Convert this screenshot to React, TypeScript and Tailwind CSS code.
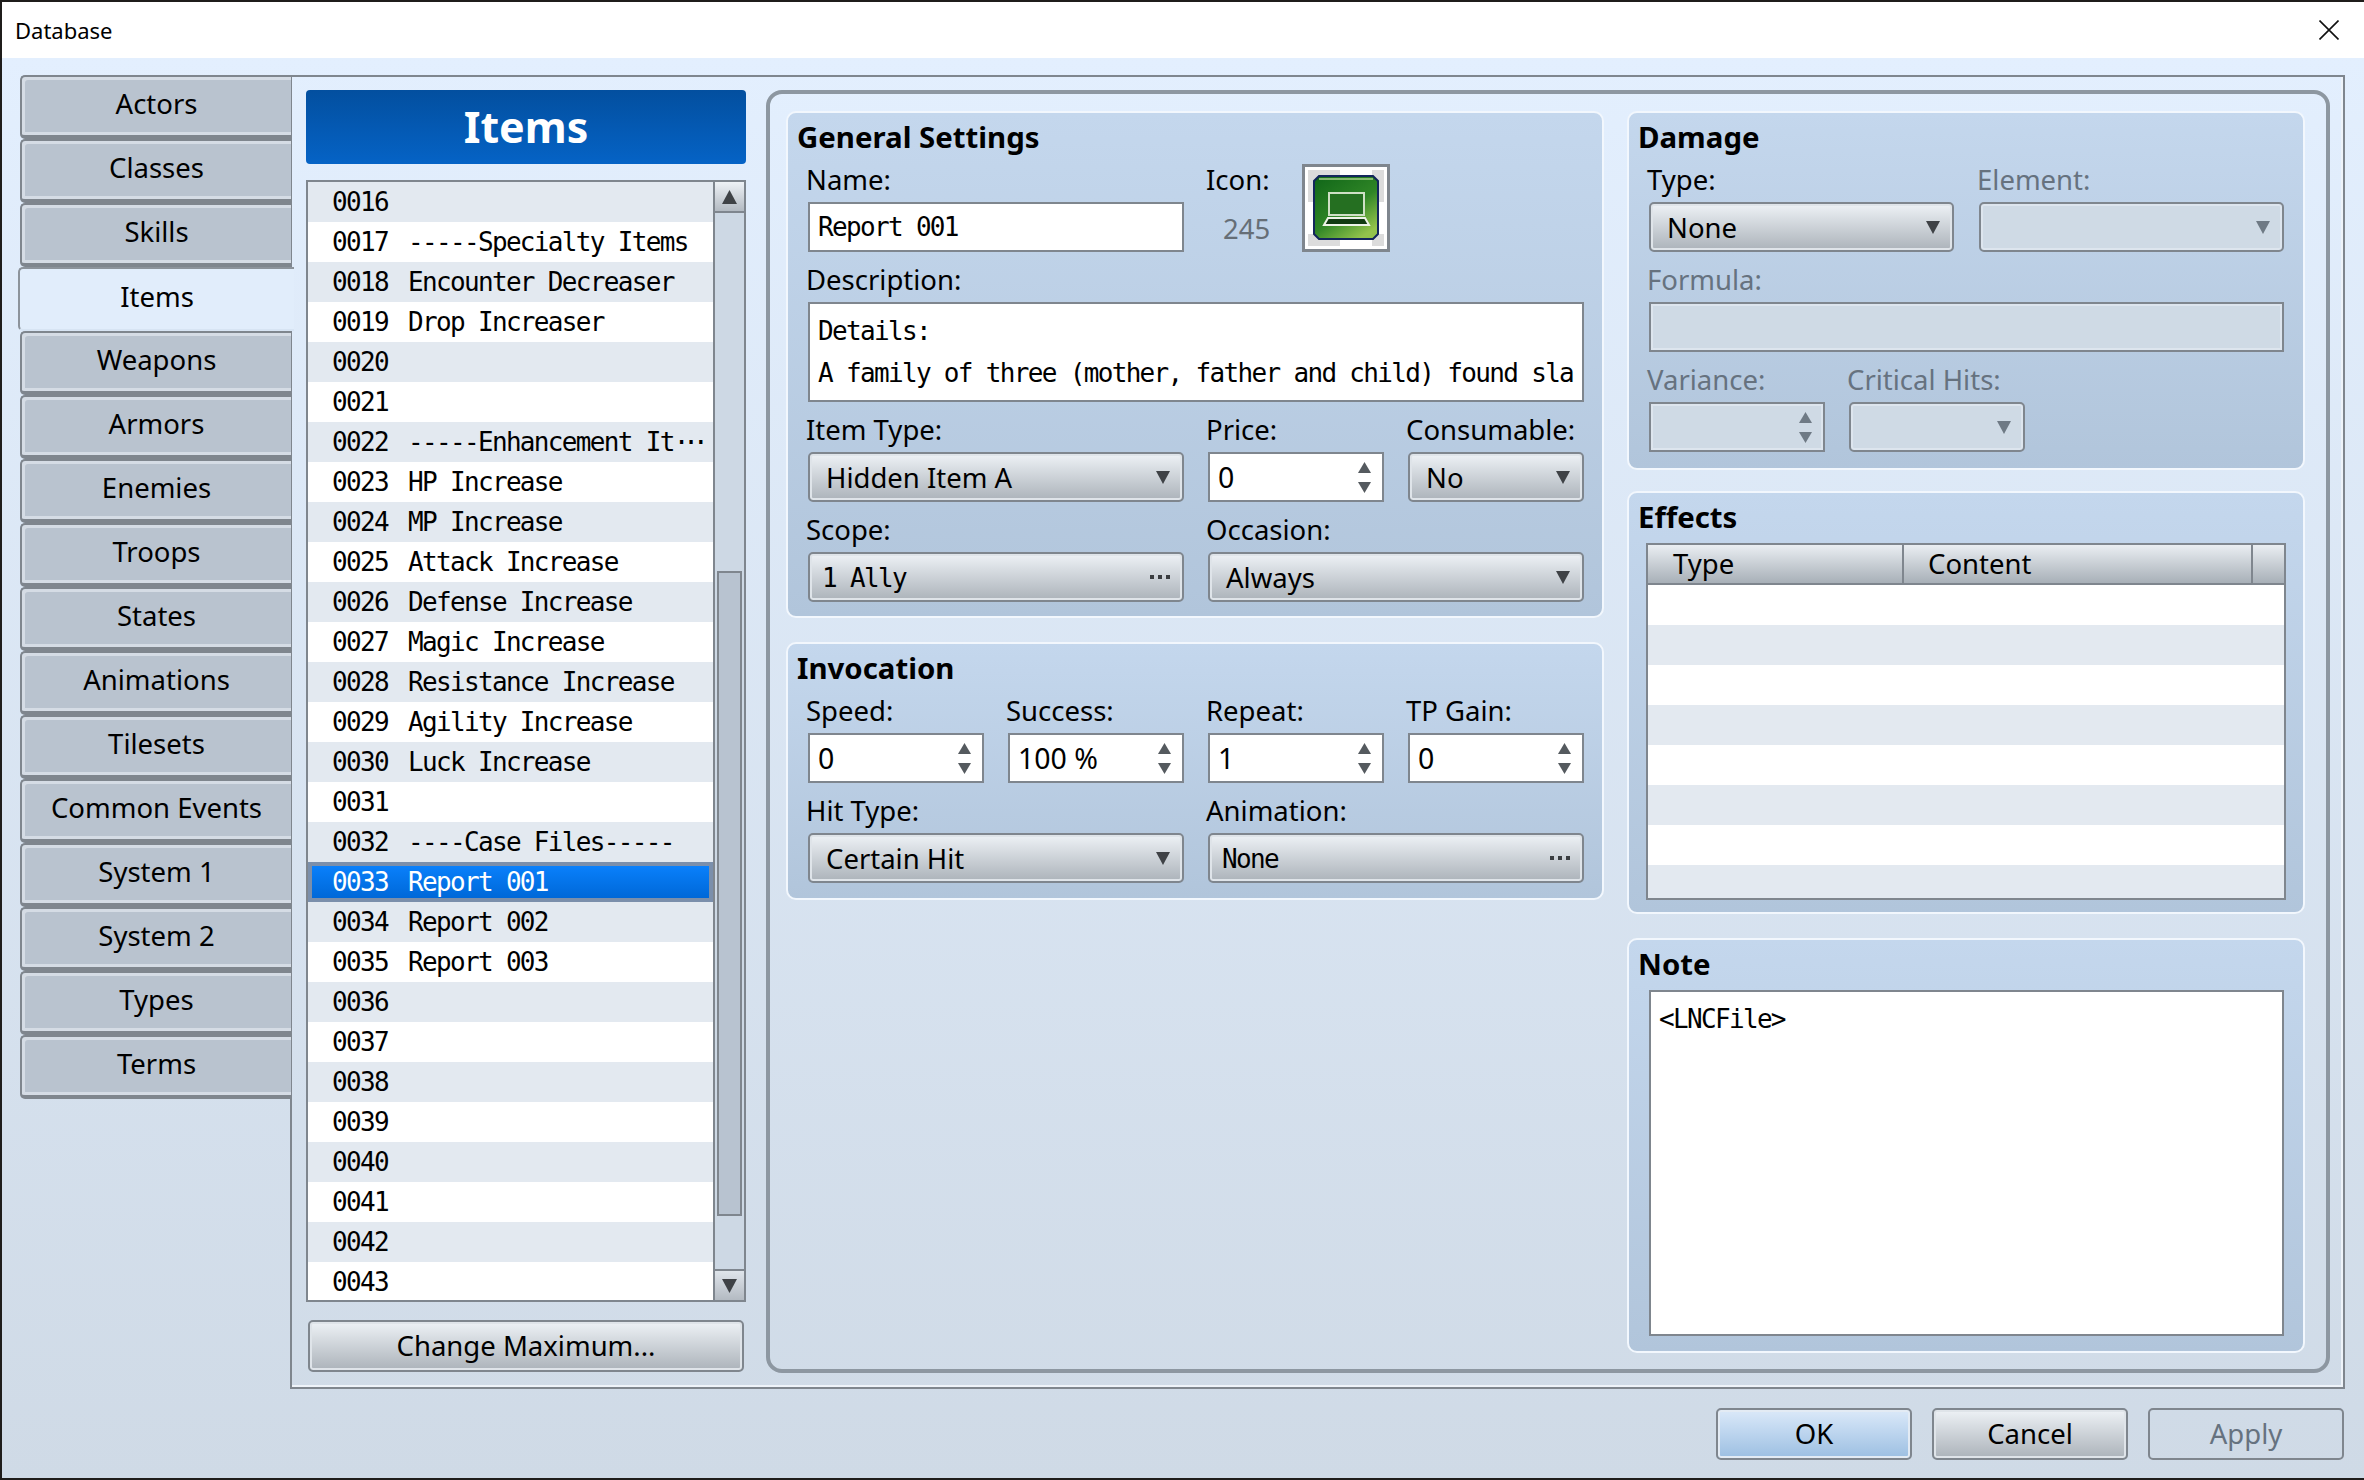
import React from 'react';

const SANS = "font-['Noto_Sans',sans-serif]";
const MONO = "font-['DejaVu_Sans_Mono',monospace] text-[26px] tracking-[-1.67px]";

const TABS = [
  'Actors', 'Classes', 'Skills', 'Items', 'Weapons', 'Armors', 'Enemies', 'Troops',
  'States', 'Animations', 'Tilesets', 'Common Events', 'System 1', 'System 2', 'Types', 'Terms',
];

const ITEMS: [string, string][] = [
  ['0016', ''], ['0017', '-----Specialty Items'], ['0018', 'Encounter Decreaser'], ['0019', 'Drop Increaser'],
  ['0020', ''], ['0021', ''], ['0022', '-----Enhancement It'], ['0023', 'HP Increase'], ['0024', 'MP Increase'],
  ['0025', 'Attack Increase'], ['0026', 'Defense Increase'], ['0027', 'Magic Increase'], ['0028', 'Resistance Increase'],
  ['0029', 'Agility Increase'], ['0030', 'Luck Increase'], ['0031', ''], ['0032', '----Case Files-----'],
  ['0033', 'Report 001'], ['0034', 'Report 002'], ['0035', 'Report 003'], ['0036', ''], ['0037', ''], ['0038', ''],
  ['0039', ''], ['0040', ''], ['0041', ''], ['0042', ''], ['0043', ''],
];

const Arrow = ({ down, color = '#3f4246', w = 14, h = 13 }: { down?: boolean; color?: string; w?: number; h?: number }) => (
  <svg width={w} height={h} viewBox="0 0 12 12" preserveAspectRatio="none" className="shrink-0">
    <path d={down ? 'M0 0H12L6 12Z' : 'M0 12H12L6 0Z'} fill={color} />
  </svg>
);

const Label = ({ children, off }: { children: React.ReactNode; off?: boolean }) => (
  <div className={`-ml-[2px] h-[42px] leading-[40px] whitespace-nowrap ${off ? 'text-[#66727f]' : 'text-black'}`}>{children}</div>
);

const Select = ({ value, mono, dots, off }: { value?: string; mono?: boolean; dots?: boolean; off?: boolean }) => (
  <div
    className={`flex h-[50px] items-center justify-between rounded-[5px] border-2 border-[#7f868e] pr-[12px] ${mono ? 'pl-[12px]' : 'pl-[16px]'} ${
      off
        ? 'bg-[#cfdae5] shadow-[inset_0_0_0_2px_#dde5ee]'
        : 'bg-gradient-to-b from-[#eef2f6] to-[#acb3ba] shadow-[inset_0_0_0_2px_#dfe4e9]'
    }`}
  >
    <span className={`whitespace-nowrap ${mono ? `pt-[3px] ${MONO}` : 'pt-[2px]'}`}>{value}</span>
    {dots ? (
      <span className="flex gap-[4px]">
        <i className="h-[4px] w-[4px] bg-[#3a3d40]" />
        <i className="h-[4px] w-[4px] bg-[#3a3d40]" />
        <i className="h-[4px] w-[4px] bg-[#3a3d40]" />
      </span>
    ) : (
      <Arrow down color={off ? '#6f7a85' : '#3f4246'} />
    )}
  </div>
);

const Spin = ({ value, off }: { value?: string; off?: boolean }) => (
  <div
    className={`flex h-[50px] items-center justify-between border-2 border-[#7f868e] pl-[8px] pr-[11px] text-[28.5px] ${
      off ? 'bg-[#cfdae5] shadow-[inset_0_0_0_2px_#dde5ee]' : 'bg-white'
    }`}
  >
    <span>{value}</span>
    <span className="flex flex-col gap-[9px]">
      <Arrow w={13} h={11} color={off ? '#6f7a85' : '#555a5f'} />
      <Arrow w={13} h={11} down color={off ? '#6f7a85' : '#555a5f'} />
    </span>
  </div>
);

const Panel = ({ title, className, children }: { title: string; className: string; children: React.ReactNode }) => (
  <div className={`rounded-[10px] border-2 border-[#f2f7fd] bg-gradient-to-b from-[#c4d7ed] to-[#b1c5db] ${className}`}>
    <div className="h-[47px] pl-[9px] text-[29.4px] font-bold leading-[48px]">{title}</div>
    {children}
  </div>
);

const Button = ({ children, className }: { children: string; className: string }) => (
  <div className={`flex items-center justify-center rounded-[5px] border-2 border-[#7f868e] ${className}`}>{children}</div>
);

const ItemIcon = () => (
  <svg width="82" height="82" viewBox="0 0 82 82">
    <defs>
      <linearGradient id="iconGreen" x1="0" y1="0" x2="0.7" y2="1">
        <stop offset="0" stopColor="#0f6518" />
        <stop offset="0.6" stopColor="#2f8526" />
        <stop offset="1" stopColor="#93c34c" />
      </linearGradient>
    </defs>
    <rect x="3" y="3" width="32" height="32" fill="#dcdcdc" />
    <rect x="67" y="3" width="12" height="32" fill="#dcdcdc" />
    <rect x="3" y="67" width="32" height="12" fill="#dcdcdc" />
    <rect x="67" y="67" width="12" height="12" fill="#dcdcdc" />
    <path d="M14 9H68L73 14V67L68 72H14L9 67V14Z" fill="url(#iconGreen)" stroke="#13265c" strokeWidth="2" />
    <path d="M14 12H68" stroke="#a9d28c" strokeWidth="1.5" />
    <rect x="24" y="26" width="35" height="22" fill="#256f21" stroke="#cfe0c6" strokeWidth="2" />
    <path d="M23 51H60L64 58H19Z" fill="#123a12" stroke="#eef3e8" strokeWidth="2" />
  </svg>
);

export default function App() {
  return (
    <div className={`flex h-[1480px] w-[2364px] flex-col overflow-hidden bg-[#1f1d1b] py-[2px] pl-[2px] text-[27.5px] text-black ${SANS}`}>
      <div className="flex h-[56px] shrink-0 items-center justify-between bg-white pl-[13px] pr-[25px] text-[22px]">
        <span>Database</span>
        <svg width="20" height="20" viewBox="0 0 20 20">
          <path d="M0.5 0.5L19.5 19.5M19.5 0.5L0.5 19.5" stroke="#111" strokeWidth="1.6" fill="none" />
        </svg>
      </div>

      <div className="flex flex-1 flex-col bg-gradient-to-b from-[#e3effe] to-[#cfdae6] pl-[18px] pr-[19px] pt-[17px]">
        <div className="flex h-[1314px]">
          <div className="relative z-10 flex w-[271px] shrink-0 flex-col">
            {TABS.map((tab) =>
              tab === 'Items' ? (
                <div
                  key={tab}
                  className="-ml-[2px] -mr-[3px] flex h-[64px] items-center justify-center rounded-l-[5px] border-2 border-r-0 border-[#8c939b] border-b-[#d7e4f3] bg-[#e1edfb] pb-[4px]"
                >
                  {tab}
                </div>
              ) : (
                <div
                  key={tab}
                  className="flex h-[64px] items-center justify-center rounded-l-[5px] border-2 border-b-4 border-r-0 border-[#7f868e] bg-[#b9c3cf] pb-[4px] shadow-[inset_3px_3px_0_#d5dce5,inset_0_-3px_0_#d5dce5]"
                >
                  {tab}
                </div>
              ),
            )}
          </div>

          <div className="-ml-[1px] flex flex-1 border-2 border-[#7f868e] pb-[14px] pl-[14px] pr-[13px] pt-[13px] shadow-[inset_-2px_-2px_0_#eef3f9]">
            <div className="flex w-[440px] shrink-0 flex-col">
              <div className="flex h-[74px] items-center justify-center rounded-[4px] bg-gradient-to-b from-[#034f9f] to-[#0563c6] text-[43px] font-bold text-white">
                Items
              </div>
              <div className="mt-[16px] flex h-[1122px] border-2 border-[#7f868e] bg-white">
                <div className={`w-[405px] shrink-0 overflow-hidden ${MONO}`}>
                  {ITEMS.map(([id, name], i) => {
                    const selected = id === '0033';
                    return (
                      <div
                        key={id}
                        className={`flex h-[40px] items-center whitespace-pre pt-[1px] ${
                          selected
                            ? 'border-4 border-[#7b8fab] bg-gradient-to-b from-[#0a80fb] to-[#0068d8] pl-[20px] text-white'
                            : i % 2 === 0
                              ? 'bg-[#e3e9f0] pl-[24px]'
                              : 'bg-white pl-[24px]'
                        }`}
                      >
                        <span className="w-[76px] shrink-0">{id}</span>
                        <span>{name}</span>
                        {id === '0022' && <span className="tracking-[-6px]">···</span>}
                      </div>
                    );
                  })}
                </div>
                <div className="flex flex-1 flex-col border-l-2 border-[#7f868e] bg-[#cdd8e4]">
                  <div className="flex h-[31px] items-center justify-center border-b-2 border-[#7f868e] bg-gradient-to-b from-[#eef2f6] to-[#b3bac2]">
                    <Arrow w={15} h={14} />
                  </div>
                  <div className="flex-1 px-[2px] pt-[358px]">
                    <div className="h-[645px] border-2 border-[#7f868e] bg-[#b8c3d0]" />
                  </div>
                  <div className="flex h-[31px] items-center justify-center border-t-2 border-[#7f868e] bg-gradient-to-b from-[#dfe5eb] to-[#b3bac2]">
                    <Arrow down w={15} h={14} />
                  </div>
                </div>
              </div>
              <Button className="mx-[2px] mt-[18px] h-[52px] bg-gradient-to-b from-[#eef2f6] to-[#acb3ba] shadow-[inset_0_0_0_2px_#dfe4e9]">
                Change Maximum...
              </Button>
            </div>

            <div className="ml-[20px] flex flex-1 gap-[23px] rounded-[16px] border-4 border-[#8d97a1] pb-[16px] pl-[16px] pr-[21px] pt-[17px]">
              <div className="flex w-[818px] shrink-0 flex-col gap-[24px]">
                <Panel title="General Settings" className="pb-[14px]">
                  <div className="grid grid-cols-[176px_176px_176px_176px] gap-x-[24px] gap-y-[8px] pl-[20px]">
                    <div className="col-span-2">
                      <Label>Name:</Label>
                      <div className={`flex h-[50px] items-center border-2 border-[#7f868e] bg-white pl-[8px] ${MONO}`}>Report 001</div>
                    </div>
                    <div className="col-span-2 flex items-end">
                      <div className="w-[94px]">
                        <Label>Icon:</Label>
                        <div className="flex h-[50px] items-center pl-[15px] pt-[4px] text-[#666e76]">245</div>
                      </div>
                      <div className="h-[88px] w-[88px] border-[3px] border-[#7f868e] bg-white">
                        <ItemIcon />
                      </div>
                    </div>
                    <div className="col-span-4">
                      <Label>Description:</Label>
                      <div className={`flex h-[100px] flex-col justify-center overflow-hidden whitespace-pre border-2 border-[#7f868e] bg-white pl-[8px] leading-[42px] ${MONO}`}>
                        <div>Details:</div>
                        <div>A family of three (mother, father and child) found sla</div>
                      </div>
                    </div>
                    <div className="col-span-2">
                      <Label>Item Type:</Label>
                      <Select value="Hidden Item A" />
                    </div>
                    <div>
                      <Label>Price:</Label>
                      <Spin value="0" />
                    </div>
                    <div>
                      <Label>Consumable:</Label>
                      <Select value="No" />
                    </div>
                    <div className="col-span-2">
                      <Label>Scope:</Label>
                      <Select value="1 Ally" mono dots />
                    </div>
                    <div className="col-span-2">
                      <Label>Occasion:</Label>
                      <Select value="Always" />
                    </div>
                  </div>
                </Panel>

                <Panel title="Invocation" className="pb-[15px]">
                  <div className="grid grid-cols-[176px_176px_176px_176px] gap-x-[24px] gap-y-[8px] pl-[20px]">
                    <div>
                      <Label>Speed:</Label>
                      <Spin value="0" />
                    </div>
                    <div>
                      <Label>Success:</Label>
                      <Spin value="100 %" />
                    </div>
                    <div>
                      <Label>Repeat:</Label>
                      <Spin value="1" />
                    </div>
                    <div>
                      <Label>TP Gain:</Label>
                      <Spin value="0" />
                    </div>
                    <div className="col-span-2">
                      <Label>Hit Type:</Label>
                      <Select value="Certain Hit" />
                    </div>
                    <div className="col-span-2">
                      <Label>Animation:</Label>
                      <Select value="None" mono dots />
                    </div>
                  </div>
                </Panel>
              </div>

              <div className="flex flex-1 flex-col">
                <Panel title="Damage" className="h-[359px]">
                  <div className="pl-[20px] pr-[19px]">
                    <div className="grid grid-cols-[305px_305px] gap-x-[25px]">
                      <div>
                        <Label>Type:</Label>
                        <Select value="None" />
                      </div>
                      <div>
                        <Label off>Element:</Label>
                        <Select off />
                      </div>
                    </div>
                    <div className="mt-[8px]">
                      <Label off>Formula:</Label>
                      <div className="h-[50px] border-2 border-[#7f868e] bg-[#cfdae5] shadow-[inset_0_0_0_2px_#dde5ee]" />
                    </div>
                    <div className="mt-[8px] flex gap-[24px]">
                      <div className="w-[176px]">
                        <Label off>Variance:</Label>
                        <Spin off />
                      </div>
                      <div className="w-[176px]">
                        <Label off>Critical Hits:</Label>
                        <Select off />
                      </div>
                    </div>
                  </div>
                </Panel>

                <Panel title="Effects" className="mt-[21px] h-[423px]">
                  <div className="ml-[17px] mr-[17px] mt-[3px] h-[357px] overflow-hidden border-2 border-[#7f868e] bg-white">
                    <div className="flex h-[40px] border-b-2 border-[#7f868e] bg-gradient-to-b from-[#eaeef2] to-[#a8b0b8]">
                      <div className="w-[256px] border-r-2 border-[#7f868e] pl-[25px] leading-[38px]">Type</div>
                      <div className="w-[349px] border-r-2 border-[#7f868e] pl-[24px] leading-[38px]">Content</div>
                    </div>
                    {[0, 1, 2, 3, 4, 5, 6, 7].map((i) => (
                      <div key={i} className={`h-[40px] ${i % 2 === 1 ? 'bg-[#e3e9f0]' : 'bg-white'}`} />
                    ))}
                  </div>
                </Panel>

                <Panel title="Note" className="mt-[24px] h-[415px]">
                  <div className={`ml-[20px] mr-[19px] mt-[3px] h-[346px] border-2 border-[#7f868e] bg-white pl-[8px] pt-[8px] ${MONO}`}>
                    {'<LNCFile>'}
                  </div>
                </Panel>
              </div>
            </div>
          </div>
        </div>

        <div className="mr-[1px] mt-[19px] flex justify-end gap-[20px]">
          <Button className="h-[52px] w-[196px] bg-gradient-to-b from-[#dbe9f9] to-[#9cbfe2] shadow-[inset_0_0_0_2px_#e3ebf4]">OK</Button>
          <Button className="h-[52px] w-[196px] bg-gradient-to-b from-[#eef2f6] to-[#acb3ba] shadow-[inset_0_0_0_2px_#dfe4e9]">Cancel</Button>
          <Button className="h-[52px] w-[196px] text-[#66727f]">Apply</Button>
        </div>
      </div>
    </div>
  );
}
